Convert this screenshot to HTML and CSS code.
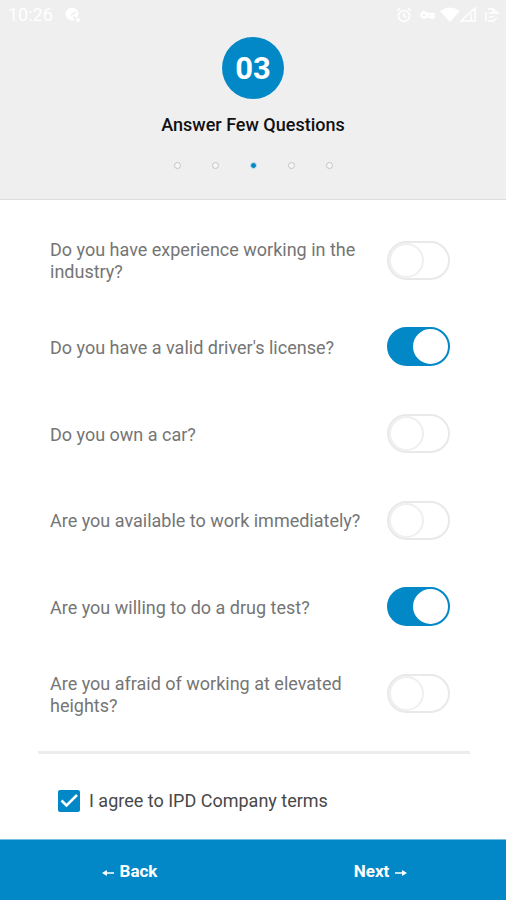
FILE: index.html
```html
<!DOCTYPE html>
<html lang="en">
<head>
<meta charset="utf-8">
<meta name="viewport" content="width=device-width, initial-scale=1">
<title>Answer Few Questions</title>
<link rel="stylesheet" href="styles.css">
</head>
<body>
<form class="screen">
  <header class="header">
    <div class="status">
      <div class="status-group">
        <span>10:26</span>
        <svg width="16" height="16" viewBox="0 0 16 16" aria-hidden="true"><circle cx="7" cy="7" r="6.500" fill="#fff"/><path d="M6 8l5-3M10 11h5M8 9l4 5" stroke="#efefef" stroke-width="1.500"/><circle cx="13" cy="13" r="2" fill="#fff"/></svg>
      </div>
      <div class="status-group status-icons">
        <svg width="16" height="16" viewBox="0 0 16 16" fill="none" stroke="#fff" stroke-width="1.500" aria-hidden="true"><circle cx="8" cy="9" r="5.500"/><path d="M8 6v3l2 2M1 4l3-3M15 4l-3-3"/></svg>
        <svg width="16" height="16" viewBox="0 0 16 16" fill="none" stroke="#fff" stroke-width="2.500" aria-hidden="true"><circle cx="4" cy="8" r="2.500"/><path d="M6 7h9M8 10h7M12 7v5"/></svg>
        <svg class="wifi" width="20" height="16" viewBox="0 0 20 16" aria-hidden="true"><path d="M0 4Q10-3 20 4L10 15z" fill="#fff"/></svg>
        <svg width="16" height="16" viewBox="0 0 16 16" fill="none" stroke="#fff" stroke-width="1.500" aria-hidden="true"><path d="M1 14H15V1zM11 7v7"/></svg>
        <svg class="battery" width="16" height="16" viewBox="0 0 16 16" fill="none" stroke="#fff" stroke-width="1.500" aria-hidden="true"><path d="M2 14V5M4 2h5l6 5M4 14h5l4-3M5 6h6M5 10h5M9 2v4h5"/></svg>
      </div>
    </div>
    <div class="step">03</div>
    <h1 class="title">Answer Few Questions</h1>
    <ol class="dots" aria-label="Progress">
      <li class="dot"></li><li class="dot"></li><li class="dot dot-current" aria-current="step"></li><li class="dot"></li><li class="dot"></li>
    </ol>
  </header>
  <main class="content">
    <div class="questions">
      <label class="question"><span>Do you have experience working in the industry?</span><input class="switch" type="checkbox" role="switch"></label>
      <label class="question"><span>Do you have a valid driver's license?</span><input class="switch" type="checkbox" role="switch" checked></label>
      <label class="question"><span>Do you own a car?</span><input class="switch" type="checkbox" role="switch"></label>
      <label class="question"><span>Are you available to work immediately?</span><input class="switch" type="checkbox" role="switch"></label>
      <label class="question"><span>Are you willing to do a drug test?</span><input class="switch" type="checkbox" role="switch" checked></label>
      <label class="question"><span>Are you afraid of working at elevated heights?</span><input class="switch" type="checkbox" role="switch"></label>
    </div>
    <hr class="divider">
    <label class="terms">
      <span class="tick">
        <input class="tick-input" type="checkbox" checked>
        <svg class="tick-mark" viewBox="0 0 22 22" fill="none" stroke="#fff" stroke-width="2.500" aria-hidden="true"><path d="M3.500 10.500L8.500 15.500L19 5"/></svg>
      </span>
      <span>I agree to IPD Company terms</span>
    </label>
  </main>
  <footer class="footer">
    <button class="nav" type="button"><svg class="arrow" viewBox="0 0 12 8" aria-hidden="true"><path d="M4 4h8" stroke="#fff" stroke-width="1.500"/><path d="M0 4l5-3v6z" fill="#fff"/></svg>Back</button>
    <button class="nav" type="button">Next<svg class="arrow" viewBox="0 0 12 8" aria-hidden="true"><path d="M0 4h8" stroke="#fff" stroke-width="1.500"/><path d="M12 4l-5-3v6z" fill="#fff"/></svg></button>
  </footer>
</form>
</body>
</html>
```
FILE: styles.css
```css
*, *::before { box-sizing: border-box; }
body {
  margin: 0;
  background: #fff;
  color: #757575;
  font-family: Roboto, sans-serif;
  font-size: 18px;
  line-height: 22px;
}
.screen { display: flex; flex-direction: column; min-height: 100vh; }
.header {
  display: flex;
  flex-direction: column;
  align-items: center;
  padding-bottom: 30px;
  background: #efefef;
  border-bottom: 1px solid #dcdcdc;
}
.status {
  display: flex;
  justify-content: space-between;
  align-items: center;
  width: 100%;
  height: 30px;
  padding: 0 6px 0 8px;
  color: #fff;
}
.status-group { display: flex; align-items: center; gap: 12px; }
.status-icons { gap: 8px; }
.wifi { margin: 0 -8px 0 -4px; }
.step {
  display: flex;
  align-items: center;
  justify-content: center;
  width: 62px;
  height: 62px;
  margin-top: 7px;
  padding-top: 2px;
  border-radius: 50%;
  background: #0288c7;
  color: #fff;
  font-size: 31px;
  font-weight: 700;
}
.title { margin: 15px 0 0; color: #111; font-size: 18px; font-weight: 500; line-height: 22px; }
.dots { display: flex; align-items: center; gap: 31px; margin: 26px 0 0; padding: 0; list-style: none; }
.dot { width: 7px; height: 7px; border: 1px solid #c4c4c4; border-radius: 50%; background: #f6f6f6; }
.dot-current { border-color: #d5e4ec; background: #0288c7; }
.content { display: flex; flex: 1; flex-direction: column; padding: 17px 36px 0 38px; }
.questions { display: grid; flex: 1; grid-auto-rows: 1fr; padding: 0 20px 0 12px; }
.question { display: flex; align-items: center; justify-content: space-between; gap: 20px; }
.question span { padding-top: 2px; }
.switch {
  appearance: none;
  display: flex;
  flex: none;
  align-items: center;
  width: 63px;
  height: 39px;
  margin: 0;
  border: 2px solid #e9e9e9;
  border-radius: 20px;
  background: #fff;
}
.switch::before {
  content: "";
  width: 35px;
  height: 35px;
  border: 2px solid #efefef;
  border-radius: 50%;
  background: #fff;
}
.switch:checked { justify-content: flex-end; border-color: #0288c7; background: #0288c7; }
.switch:checked::before { border-color: #fff; }
.divider { width: 100%; height: 3px; margin: 14px 0 0; border: 0; background: #ececec; }
.terms { display: flex; align-items: center; gap: 9px; height: 85px; padding: 8px 20px 0; color: #484848; }
.tick { display: grid; width: 22px; height: 22px; }
.tick-input { appearance: none; grid-area: 1 / 1; width: 22px; height: 22px; margin: 0; border: 2px solid #0288c7; border-radius: 2px; }
.tick-input:checked { background: #0288c7; }
.tick-mark { grid-area: 1 / 1; width: 22px; height: 22px; pointer-events: none; }
.footer { display: grid; grid-template-columns: 1fr 1fr; height: 61px; padding-left: 4px; border-top: 1px solid #76bfe0; background: #0288c7; }
.nav {
  display: flex;
  align-items: center;
  justify-content: center;
  gap: 6px;
  padding: 2px 0 0;
  border: 0;
  background: none;
  color: #fff;
  font: 700 17px/22px Roboto, sans-serif;
}
.arrow { width: 12px; height: 8px; margin-top: 4px; }
```
